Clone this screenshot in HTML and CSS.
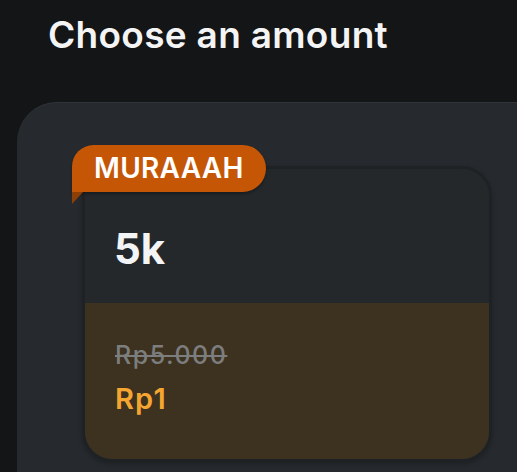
FILE: index.html
```html
<!DOCTYPE html>
<html>
<head>
<meta charset="utf-8">
<link rel="stylesheet" href="styles.css">
</head>
<body>
<h1 class="title">Choose an amount</h1>
<div class="panel">
  <div class="card-wrap">
    <div class="badge">MURAAAH<span class="fold"></span></div>
    <div class="card">
      <div class="card-top"><span class="amount">5k</span></div>
      <div class="card-bottom">
        <span class="old-price">Rp5.000</span>
        <span class="new-price">Rp1</span>
      </div>
    </div>
  </div>
</div>
</body>
</html>
```
FILE: styles.css
```css
html, body {
  margin: 0;
  padding: 0;
  background: #141517;
  width: 517px;
  height: 472px;
  overflow: hidden;
  font-family: Inter, "Noto Sans", sans-serif;
}
.title {
  margin: 0;
  padding: 13px 0 0 48px;
  height: 102px;
  box-sizing: border-box;
  font-size: 37px;
  font-weight: 600;
  letter-spacing: 0.3px;
  color: #f4f4f5;
  line-height: 44px;
}
.panel {
  margin-left: 17px;
  width: 500px;
  height: 370px;
  background: #262a2e;
  border-top: 1px solid #30353a;
  border-radius: 40px 0 0 0;
  padding: 63px 0 0 65px;
  box-sizing: border-box;
}
.card-wrap {
  position: relative;
  width: 410px;
}
.card {
  width: 410px;
  height: 296px;
  border: 3px solid #1f2225;
  border-radius: 30px;
  overflow: hidden;
  box-sizing: border-box;
  display: flex;
  flex-direction: column;
  box-shadow: 0 2px 4px rgba(0,0,0,0.25);
}
.card-top {
  height: 134px;
  background: #24282b;
  display: flex;
  align-items: center;
  padding: 0 0 0 29px;
}
.amount {
  font-size: 42px;
  font-weight: 700;
  color: #f3f4f6;
  margin-top: 24px;
}
.card-bottom {
  flex: 1;
  background: #3d3120;
  display: flex;
  flex-direction: column;
  padding: 37px 0 0 30px;
}
.old-price {
  font-size: 25px;
  font-weight: 500;
  letter-spacing: 1.5px;
  color: #7c7d7d;
  text-decoration: line-through;
  line-height: 30px;
}
.new-price {
  font-size: 29px;
  font-weight: 600;
  letter-spacing: 1.2px;
  color: #f5a630;
  line-height: 36px;
  margin-top: 11px;
}
.badge {
  position: absolute;
  left: -10px;
  top: -21px;
  z-index: 2;
  height: 47px;
  padding: 0 22px 0 22px;
  background: #c45606;
  border-radius: 22px 24px 24px 0;
  color: #fff;
  font-size: 28px;
  font-weight: 600;
  letter-spacing: 0.3px;
  line-height: 47px;
  box-shadow: 0 2px 3px rgba(0,0,0,0.3);
}
.fold {
  position: absolute;
  left: 0;
  top: 47px;
  width: 0;
  height: 0;
  border-left: 11px solid #8e3f05;
  border-bottom: 12px solid transparent;
}
```
